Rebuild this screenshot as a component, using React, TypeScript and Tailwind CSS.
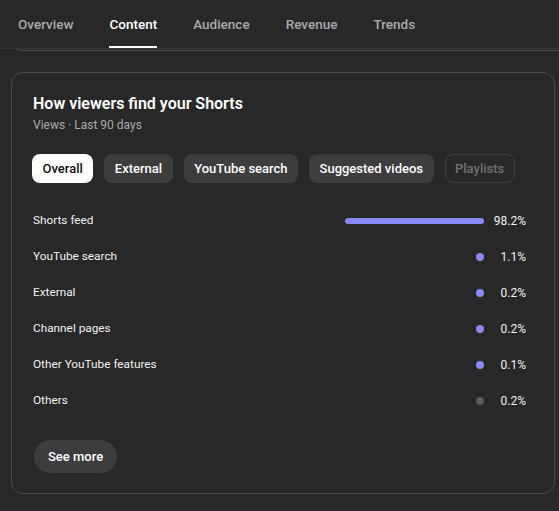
import React from "react";

const tabs = ["Overview", "Content", "Audience", "Revenue", "Trends"];
const chips = [
  { label: "Overall", state: "active" },
  { label: "External", state: "normal" },
  { label: "YouTube search", state: "normal" },
  { label: "Suggested videos", state: "normal" },
  { label: "Playlists", state: "disabled" },
];
const rows = [
  { label: "Shorts feed", pct: "98.2%", width: 139, color: "bg-[#8a88f7]" },
  { label: "YouTube search", pct: "1.1%", width: 8, color: "bg-[#8a88f7]" },
  { label: "External", pct: "0.2%", width: 8, color: "bg-[#8a88f7]" },
  { label: "Channel pages", pct: "0.2%", width: 8, color: "bg-[#8a88f7]" },
  { label: "Other YouTube features", pct: "0.1%", width: 8, color: "bg-[#8a88f7]" },
  { label: "Others", pct: "0.2%", width: 8, color: "bg-[#5c5c5c]" },
];

export default function App() {
  return (
    <div className="w-[559px] h-[511px] overflow-hidden bg-[#282828] font-['Roboto','Liberation_Sans',sans-serif] text-[#f1f1f1]">
      {/* Tab bar */}
      <div className="h-[49px] border-b border-[#363636] flex items-stretch">
        {tabs.map((t) => (
          <div key={t} className="px-[18px] flex">
            <div
              className={
                "relative flex items-center text-[13.5px] font-medium " +
                (t === "Content" ? "text-white" : "text-[#aaaaaa]")
              }
            >
              {t}
              {t === "Content" && (
                <div className="absolute left-0 right-0 bottom-0 h-[2px] bg-white" />
              )}
            </div>
          </div>
        ))}
      </div>
      {/* Bottom edge of card scrolled under tabs */}
      <div className="h-[2px] overflow-hidden">
        <div className="mt-[-18px] h-[20px] ml-[11px] mr-[-20px] border border-[#4a4a4a] rounded-[12px]" />
      </div>

      {/* Main card */}
      <div className="mt-[21px] ml-[11px] mr-[4px] h-[422px] border border-[#4a4a4a] rounded-[12px] pl-[21px] pr-[28px] pt-[20px]">
        <div className="text-[16px] leading-[22px] font-semibold text-white">
          How viewers find your Shorts
        </div>
        <div className="mt-[1px] text-[12px] leading-[18px] text-[#aaaaaa]">
          Views · Last 90 days
        </div>

        <div className="mt-[20px] ml-[-1px] flex gap-[11px]">
          {chips.map((c) => (
            <div
              key={c.label}
              className={
                "h-[29px] rounded-[8px] flex items-center text-[13px] font-medium whitespace-nowrap " +
                (c.state === "active"
                  ? "px-[10.5px] bg-white text-[#0f0f0f]"
                  : c.state === "disabled"
                  ? "px-[9.5px] border border-[#3f3f3f] text-[#717171]"
                  : "px-[10.5px] bg-[#3d3d3d] text-white")
              }
            >
              {c.label}
            </div>
          ))}
        </div>

        <div className="mt-[20px] flex flex-col">
          {rows.map((r) => (
            <div key={r.label} className="h-[36px] flex items-center text-[12px]">
              <div className="flex-1 text-[11.8px] text-[#f1f1f1]">{r.label}</div>
              <div className="w-[140px] flex justify-end items-center">
                <div
                  className={"rounded-full " + r.color + (r.width === 8 ? " h-[8px]" : " h-[6px]")}
                  style={{ width: r.width }}
                />
              </div>
              <div className="w-[34px] ml-[8px] text-right text-[#f1f1f1]">{r.pct}</div>
            </div>
          ))}
        </div>

        <button className="mt-[21px] ml-[1px] h-[33px] px-[14px] rounded-full bg-[#3d3d3d] text-[13px] font-medium text-white">
          See more
        </button>
      </div>
    </div>
  );
}
